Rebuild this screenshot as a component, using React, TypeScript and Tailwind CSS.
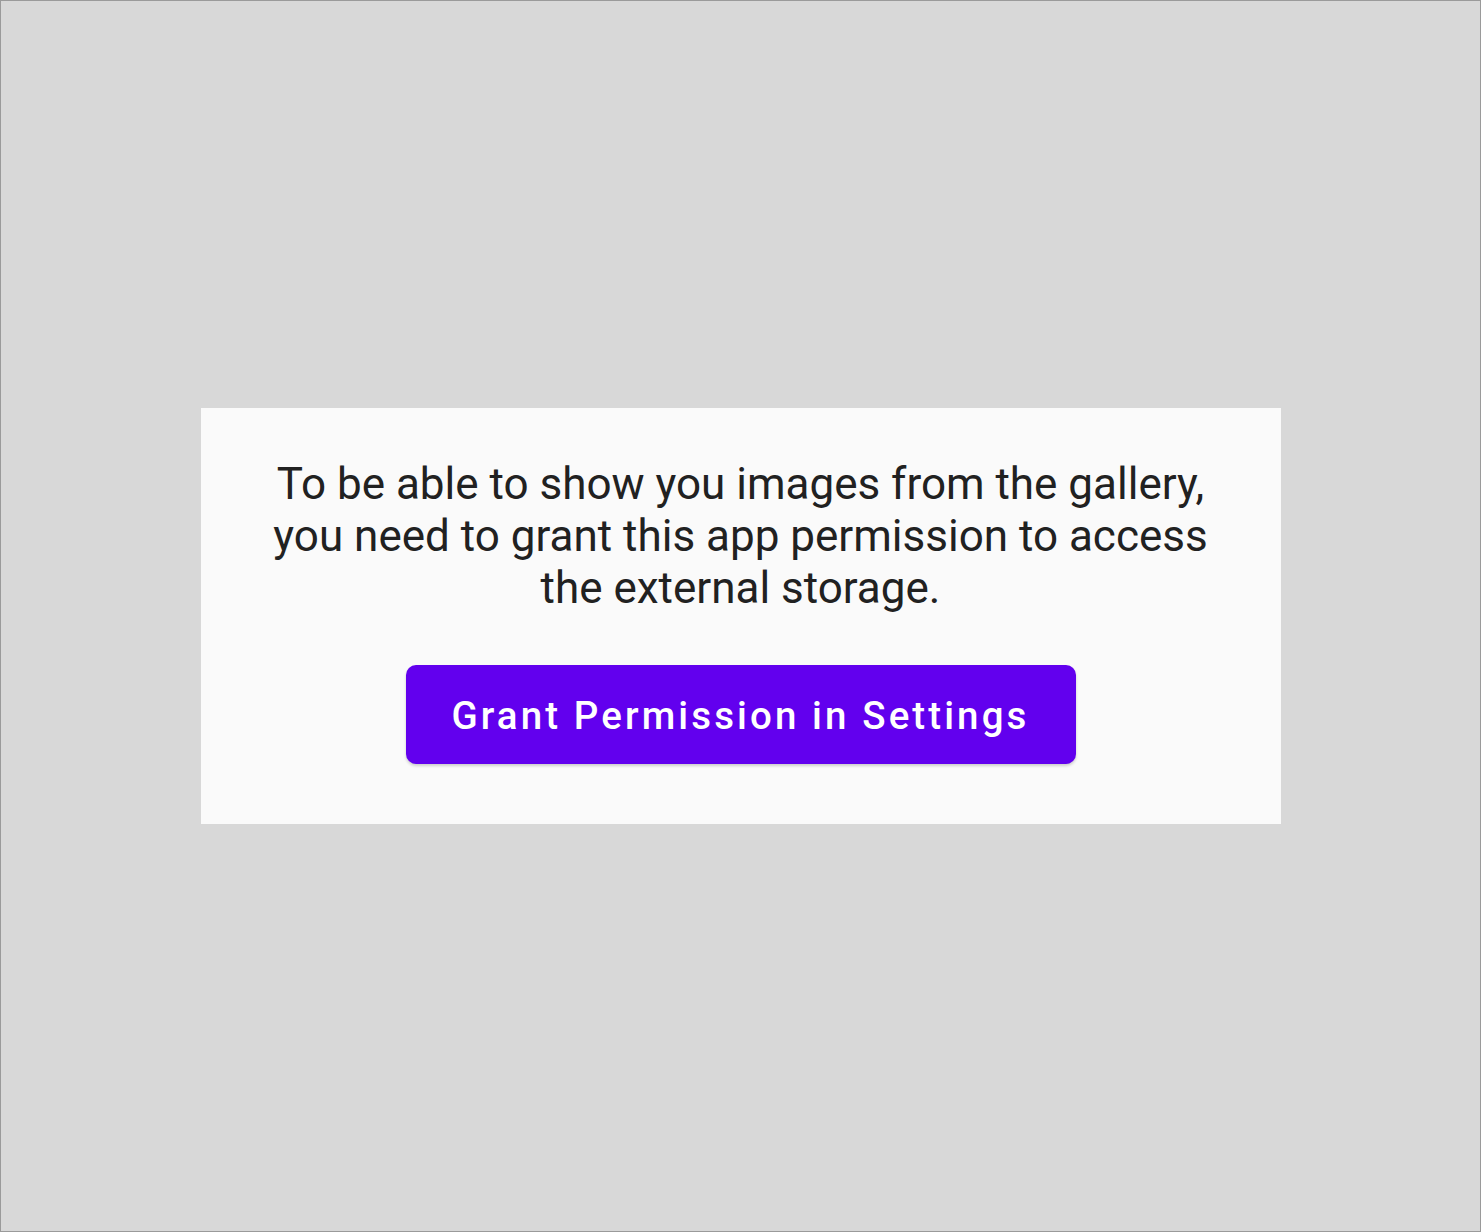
const App = () => {
  return (
    <div
      className="h-[1232px] w-full border border-[#9a9a9a] bg-[#d8d8d8] flex items-center justify-center"
      style={{ fontFamily: 'Roboto, "Noto Sans", sans-serif' }}
    >
      <div className="w-[1080px] bg-[#fafafa] pt-[50px] pb-[60px] px-[44px] flex flex-col items-center">
        <p className="text-center text-[44px] leading-[52px] text-[#212121]">
          To be able to show you images from the gallery, you need to grant this app permission to access the external storage.
        </p>
        <button className="mt-[51px] h-[99px] w-[670px] pt-[3px] rounded-[10px] bg-[#6200ee] text-white text-[38.5px] font-medium tracking-[3.1px] shadow-[0_2px_3px_rgba(0,0,0,0.18)]">
          Grant Permission in Settings
        </button>
      </div>
    </div>
  );
};

export default App;
